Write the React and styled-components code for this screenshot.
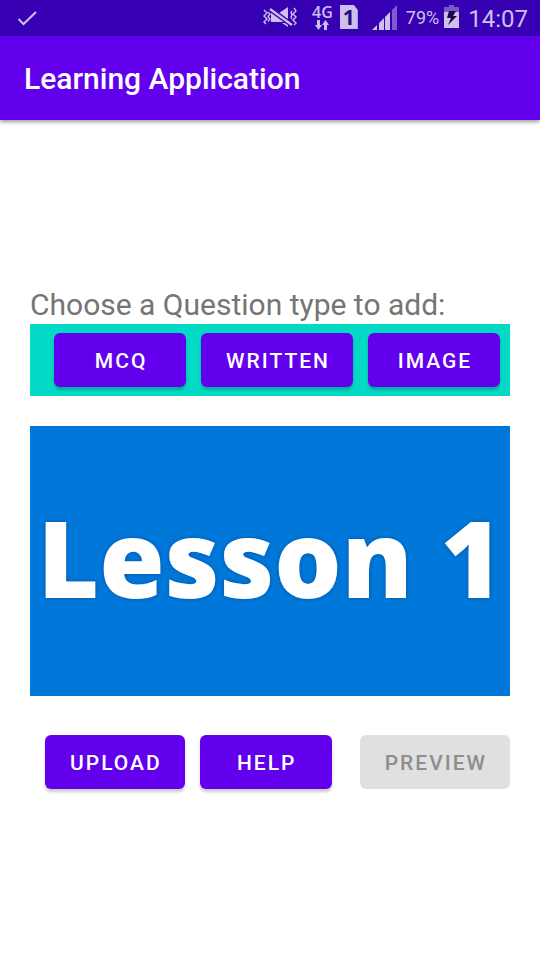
import React from "react";
import styled, { createGlobalStyle } from "styled-components";

const GlobalStyle = createGlobalStyle`
  * { box-sizing: border-box; }
  body {
    margin: 0;
    background: #ffffff;
    font-family: Roboto, "Noto Sans", sans-serif;
  }
`;

const Screen = styled.div`
  display: flex;
  flex-direction: column;
  min-height: 100vh;
`;

const StatusBar = styled.div`
  display: flex;
  align-items: center;
  justify-content: space-between;
  height: 36px;
  padding: 0 12px 0 16px;
  background: #3700b3;
  color: #cdc0ec;
`;

const StatusGroup = styled.div`
  display: flex;
  align-items: center;
  height: 34px;
  margin-bottom: 2px;
`;

const StatusIcon = styled.svg`
  display: block;
  flex: none;
  margin-right: ${(p) => p.$gap || 0}px;
`;

const Network = styled.div`
  display: flex;
  flex-direction: column;
  align-items: center;
  margin-right: 7px;
  font: 600 16px/16px "Open Sans", sans-serif;
`;

const Sim = styled.span`
  width: 18px;
  height: 24px;
  margin-right: 14px;
  background: #cdc0ec;
  clip-path: polygon(0 0, 14px 0, 100% 5px, 100% 100%, 0 100%);
  color: #2a0a80;
  font: 700 21px/24px "Open Sans", sans-serif;
  text-align: center;
`;

const Battery = styled.span`
  margin-right: 5px;
  padding-top: 2px;
  font-size: 18px;
  line-height: 24px;
`;

const Clock = styled.time`
  padding-top: 4px;
  font-size: 24px;
  line-height: 28px;
`;

const AppBar = styled.header`
  display: flex;
  align-items: center;
  height: 84px;
  padding: 2px 24px 0;
  background: #6200ee;
  box-shadow: 0 2px 4px rgba(0, 0, 0, 0.4);
`;

const Title = styled.h1`
  margin: 0;
  color: #ffffff;
  font-size: 30px;
  font-weight: 500;
  line-height: 36px;
`;

const Main = styled.main`
  display: flex;
  flex: 1;
  flex-direction: column;
  justify-content: center;
  padding: 0 30px 3px;
`;

const Prompt = styled.h2`
  margin: 0;
  padding-bottom: 2px;
  color: #757575;
  font-size: 30px;
  font-weight: 400;
  line-height: 34px;
`;

const TypeBar = styled.div`
  display: flex;
  justify-content: flex-end;
  gap: 15px;
  padding: 9px 10px;
  background: #03dac5;
`;

const Button = styled.button`
  min-width: 132px;
  height: 54px;
  padding: 2px 23px 0 25px;
  border: 0;
  border-radius: 6px;
  background: #6200ee;
  box-shadow: 0 3px 3px rgba(0, 0, 0, 0.2);
  color: #ffffff;
  font-family: inherit;
  font-size: 21px;
  font-weight: 500;
  line-height: 24px;
  letter-spacing: 2px;
  white-space: nowrap;

  &:disabled {
    background: #e0e0e0;
    box-shadow: none;
    color: #8e8e8e;
  }
`;

const Cover = styled.div`
  display: flex;
  align-items: center;
  justify-content: center;
  aspect-ratio: 16 / 9;
  margin: 30px 0 39px;
  padding-bottom: 8px;
  background: #0078da;
  color: #ffffff;
  font: 900 106px/144px "Noto Sans", "Open Sans", sans-serif;
  text-shadow: 0 0 4px rgba(0, 30, 80, 0.4);
  white-space: nowrap;
`;

const Actions = styled.div`
  display: flex;
  gap: 15px;
  padding-left: 15px;

  & > :last-child {
    margin-left: auto;
  }
`;

function CheckIcon() {
  return (
    <StatusIcon width="22" height="18" viewBox="0 0 22 18" fill="none" aria-hidden="true">
      <path d="M2.5 10 7.5 15 20 3" stroke="#cdc0ec" strokeWidth="2" />
    </StatusIcon>
  );
}

function VibrateMuteIcon() {
  return (
    <StatusIcon $gap={15} width="34" height="22" viewBox="0 0 34 22" fill="none" aria-hidden="true">
      <path
        d="M1 4 4 7 1 10 4 13 1 16 3 18M5 6 7 8 5 10.500 7 13 5 15.500M31 2 33 5 30 8 33 11 30 14 33 17 31 19M29 5 28 6.500 29 9 28 11 29 13"
        stroke="#cdc0ec"
        strokeWidth="1.4"
      />
      <path d="M16 7 25 1V14ZM8 7h3l9 7v2H8ZM25 17V21l-6-4Z" fill="#cdc0ec" />
      <path d="M7 3 29 19" stroke="#3700b3" strokeWidth="5" />
      <path d="M7 3 29 19" stroke="#cdc0ec" strokeWidth="2.2" />
    </StatusIcon>
  );
}

function DataArrows() {
  return (
    <StatusIcon width="14" height="10" viewBox="0 0 14 10" fill="#cdc0ec" aria-hidden="true">
      <path d="M2 0h3v5h2L3.500 10 0 5h2ZM9 10h3V5h2L10.500 0 7 5h2Z" />
    </StatusIcon>
  );
}

function SignalIcon() {
  return (
    <StatusIcon $gap={9} width="25" height="25" viewBox="0 0 25 25" aria-hidden="true">
      <path d="M0 25 5 20v5ZM7 18l5-5v12H7ZM13 12l5-5v18h-5Z" fill="#cdc0ec" />
      <path d="M20 5 25 0V25H20Z" fill="#7f5bcf" />
    </StatusIcon>
  );
}

function BatteryIcon() {
  return (
    <StatusIcon $gap={9} width="15" height="25" viewBox="0 0 15 25" aria-hidden="true">
      <path d="M5 0h5v2h5v5H0V2h5Z" fill="#7959ca" />
      <path d="M0 7h15v16H0Z" fill="#cdc0ec" />
      <path d="M5 6h7l-3 5h4L4 20l3-7H3Z" fill="#1c064e" />
    </StatusIcon>
  );
}

const questionTypes = ["MCQ", "WRITTEN", "IMAGE"];

export default function App() {
  return (
    <Screen>
      <GlobalStyle />
      <StatusBar>
        <CheckIcon />
        <StatusGroup>
          <VibrateMuteIcon />
          <Network>
            4G
            <DataArrows />
          </Network>
          <Sim>1</Sim>
          <SignalIcon />
          <Battery>79%</Battery>
          <BatteryIcon />
          <Clock>14:07</Clock>
        </StatusGroup>
      </StatusBar>
      <AppBar>
        <Title>Learning Application</Title>
      </AppBar>
      <Main>
        <Prompt>Choose a Question type to add:</Prompt>
        <TypeBar>
          {questionTypes.map((type) => (
            <Button key={type} type="button">
              {type}
            </Button>
          ))}
        </TypeBar>
        <Cover>Lesson 1</Cover>
        <Actions>
          <Button type="button">UPLOAD</Button>
          <Button type="button">HELP</Button>
          <Button type="button" disabled>
            PREVIEW
          </Button>
        </Actions>
      </Main>
    </Screen>
  );
}
